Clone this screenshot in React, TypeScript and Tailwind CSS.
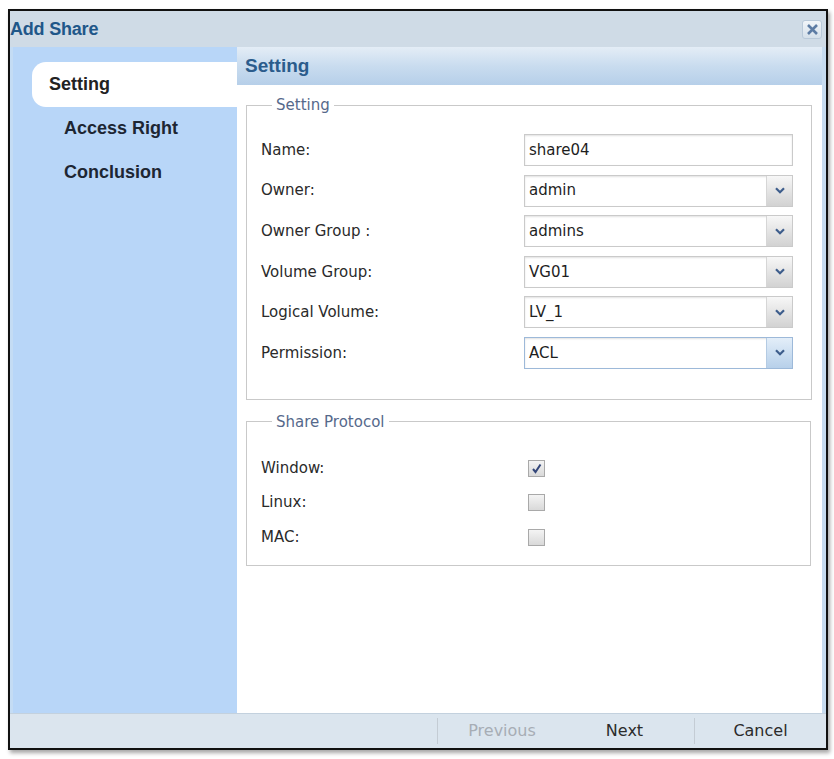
import React from "react";

const labelFont = { fontFamily: '"DejaVu Sans", Verdana, sans-serif' };
const boldFont = { fontFamily: '"Liberation Sans", Arial, sans-serif' };

type Field = { label: string; value: string; select: boolean; focused?: boolean };

const fields: Field[] = [
  { label: "Name:", value: "share04", select: false },
  { label: "Owner:", value: "admin", select: true },
  { label: "Owner Group :", value: "admins", select: true },
  { label: "Volume Group:", value: "VG01", select: true },
  { label: "Logical Volume:", value: "LV_1", select: true },
  { label: "Permission:", value: "ACL", select: true, focused: true },
];

const protocols = [
  { label: "Window:", checked: true },
  { label: "Linux:", checked: false },
  { label: "MAC:", checked: false },
];

function Chevron() {
  return (
    <svg width="10" height="7" viewBox="0 0 10 7">
      <polyline points="1,1.2 5,5.2 9,1.2" fill="none" stroke="#3d5d8c" strokeWidth="2.2" />
    </svg>
  );
}

function Input({ field }: { field: Field }) {
  return (
    <div
      className={`flex h-[32px] w-[269px] items-stretch border bg-white shadow-[inset_0_1px_2px_rgba(0,0,0,0.12)] ${
        field.focused ? "border-[#9db9d9]" : "border-[#cacaca]"
      }`}
    >
      <div className="flex flex-1 items-center pl-[4px] text-[15px] text-[#1e1e1e]">{field.value}</div>
      {field.select && (
        <div
          className={`flex w-[26px] items-center justify-center border-l ${
            field.focused
              ? "border-[#b4cbe3] bg-gradient-to-b from-[#e3eef9] to-[#b7d0ea]"
              : "border-[#d6d6d6] bg-gradient-to-b from-[#f7f7f7] to-[#d2d2d2]"
          }`}
        >
          <Chevron />
        </div>
      )}
    </div>
  );
}

function Checkbox({ checked }: { checked: boolean }) {
  return (
    <div className="flex h-[17px] w-[17px] items-center justify-center border border-[#a9a9a9] bg-gradient-to-b from-[#f4f4f4] to-[#d9d9d9]">
      {checked && (
        <svg width="11" height="11" viewBox="0 0 11 11">
          <path d="M2 6 L4.5 9 L9.5 1.5" fill="none" stroke="#34477a" strokeWidth="2" />
        </svg>
      )}
    </div>
  );
}

export default function App() {
  return (
    <div className="h-[759px] w-[834px] bg-white pl-[8px] pt-[9px]" style={labelFont}>
      <div className="flex h-[741px] w-[820px] flex-col border-2 border-[#111] shadow-[2px_3px_4px_rgba(0,0,0,0.35)]">
        {/* title bar */}
        <div className="flex h-[36px] items-center justify-between bg-[#cfdbe6] pr-[4px]">
          <span className="text-[18px] font-bold tracking-[-0.2px] text-[#1f5789]" style={boldFont}>
            Add Share
          </span>
          <div className="flex h-[19px] w-[20px] items-center justify-center rounded-[3px] border border-[#b9c9d9] bg-gradient-to-b from-[#f1f5f9] to-[#d5e0ea]">
            <svg width="13" height="13" viewBox="0 0 13 13">
              <path d="M2 2 L11 11 M11 2 L2 11" stroke="#5d7ca4" strokeWidth="2.6" />
            </svg>
          </div>
        </div>

        <div className="flex flex-1">
          {/* step list */}
          <div className="w-[227px] border-l-[3px] border-[#c4dcf4] bg-[#b8d6f8] pt-[15px]" style={boldFont}>
            <div className="ml-[19px] flex h-[45px] items-center rounded-l-[14px] bg-white pl-[17px] text-[18px] font-bold text-[#222]">
              Setting
            </div>
            <div className="flex h-[43px] items-center pl-[51px] text-[18px] font-bold text-[#1d2633]">Access Right</div>
            <div className="flex h-[45px] items-center pl-[51px] text-[18px] font-bold text-[#1d2633]">Conclusion</div>
          </div>

          {/* form panel */}
          <div className="flex-1 border-r-4 border-[#c6dbef] bg-white">
            <div className="flex h-[38px] items-center bg-gradient-to-b from-[#e4edf6] via-[#c9dcef] to-[#b6cfe9] pl-[8px]">
              <span className="text-[19px] font-bold text-[#2b5c8c]" style={boldFont}>
                Setting
              </span>
            </div>

            <fieldset className="ml-[9px] mr-[10px] mt-[11px] border border-[#c9c9c9] px-[14px] pb-[30px] pt-[20px]">
              <legend className="ml-[11px] px-[4px] text-[15px] leading-[18px] text-[#56698b]">Setting</legend>
              <div className="flex flex-col gap-[8.6px]">
                {fields.map((f) => (
                  <div key={f.label} className="flex items-center">
                    <span className="w-[263px] text-[15px] text-[#2a2a2a]">{f.label}</span>
                    <Input field={f} />
                  </div>
                ))}
              </div>
            </fieldset>

            <fieldset className="ml-[9px] mr-[11px] mt-[13px] border border-[#c9c9c9] px-[14px] pb-[11px] pt-[20px]">
              <legend className="ml-[11px] px-[4px] text-[15px] leading-[18px] text-[#56698b]">Share Protocol</legend>
              {protocols.map((p) => (
                <div key={p.label} className="flex h-[34.5px] items-center">
                  <span className="w-[267px] text-[15px] text-[#2a2a2a]">{p.label}</span>
                  <Checkbox checked={p.checked} />
                </div>
              ))}
            </fieldset>
          </div>
        </div>

        {/* wizard buttons */}
        <div className="flex h-[35px] items-center border-t border-[#c3d1de] bg-[#dbe5ee] text-[16px]">
          <div className="flex-1" />
          <div className="h-[26px] w-px bg-[#c4ccd4]" />
          <div className="w-[128px] text-center text-[#a7adb5]">Previous</div>
          <div className="w-[117px] text-center text-[#2b2b2b]">Next</div>
          <div className="ml-[11px] h-[26px] w-px bg-[#c4ccd4]" />
          <div className="w-[131px] text-center text-[#2b2b2b]">Cancel</div>
        </div>
      </div>
    </div>
  );
}
